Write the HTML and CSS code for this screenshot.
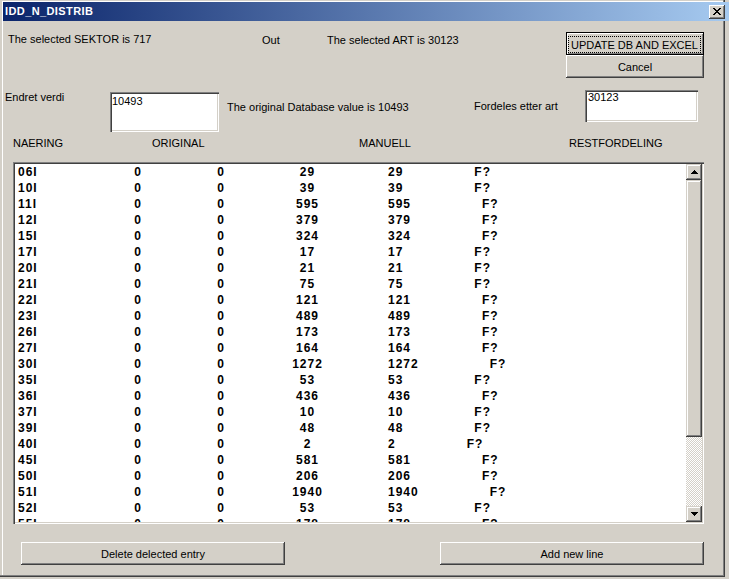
FILE: index.html
```html
<!DOCTYPE html>
<html>
<head>
<meta charset="utf-8">
<title>IDD_N_DISTRIB</title>
<link rel="stylesheet" href="styles.css">
</head>
<body>
<div class="window">
  <div class="titlebar">
    <span class="title">IDD_N_DISTRIB</span>
    <span class="close"><svg width="8" height="7" viewBox="0 0 8 7"><path d="M0 0h2v1h-2z M6 0h2v1h-2z M1 1h2v1h-2z M5 1h2v1h-2z M2 2h4v1h-4z M3 3h2v1h-2z M2 4h4v1h-4z M1 5h2v1h-2z M5 5h2v1h-2z M0 6h2v1h-2z M6 6h2v1h-2z" fill="#000"/></svg></span>
  </div>
  <div class="client">
    <div class="row1">
      <span class="lbl sektor">The selected SEKTOR is 717</span>
      <span class="lbl out">Out</span>
      <span class="lbl art">The selected ART is 30123</span>
      <div class="btncol">
        <button class="btn default"><span class="focus">UPDATE DB AND EXCEL</span></button>
        <button class="btn">Cancel</button>
      </div>
    </div>
    <div class="row2">
      <span class="lbl endret">Endret verdi</span>
      <div class="edit edit1">10493</div>
      <span class="lbl orig">The original Database value is 10493</span>
      <span class="lbl ford">Fordeles etter art</span>
      <div class="edit edit2">30123</div>
    </div>
    <div class="hdr">
      <span class="h1">NAERING</span>
      <span class="h2">ORIGINAL</span>
      <span class="h3">MANUELL</span>
      <span class="h4">RESTFORDELING</span>
    </div>
    <div class="listbox">
      <div class="rows">
        <div class="row"><span class="c1">06I</span><span class="c2">0</span><span class="c3">0</span><span class="c4">29</span><span class="c5">29<span class="fq">F?</span></span></div>
        <div class="row"><span class="c1">10I</span><span class="c2">0</span><span class="c3">0</span><span class="c4">39</span><span class="c5">39<span class="fq">F?</span></span></div>
        <div class="row"><span class="c1">11I</span><span class="c2">0</span><span class="c3">0</span><span class="c4">595</span><span class="c5">595<span class="fq">F?</span></span></div>
        <div class="row"><span class="c1">12I</span><span class="c2">0</span><span class="c3">0</span><span class="c4">379</span><span class="c5">379<span class="fq">F?</span></span></div>
        <div class="row"><span class="c1">15I</span><span class="c2">0</span><span class="c3">0</span><span class="c4">324</span><span class="c5">324<span class="fq">F?</span></span></div>
        <div class="row"><span class="c1">17I</span><span class="c2">0</span><span class="c3">0</span><span class="c4">17</span><span class="c5">17<span class="fq">F?</span></span></div>
        <div class="row"><span class="c1">20I</span><span class="c2">0</span><span class="c3">0</span><span class="c4">21</span><span class="c5">21<span class="fq">F?</span></span></div>
        <div class="row"><span class="c1">21I</span><span class="c2">0</span><span class="c3">0</span><span class="c4">75</span><span class="c5">75<span class="fq">F?</span></span></div>
        <div class="row"><span class="c1">22I</span><span class="c2">0</span><span class="c3">0</span><span class="c4">121</span><span class="c5">121<span class="fq">F?</span></span></div>
        <div class="row"><span class="c1">23I</span><span class="c2">0</span><span class="c3">0</span><span class="c4">489</span><span class="c5">489<span class="fq">F?</span></span></div>
        <div class="row"><span class="c1">26I</span><span class="c2">0</span><span class="c3">0</span><span class="c4">173</span><span class="c5">173<span class="fq">F?</span></span></div>
        <div class="row"><span class="c1">27I</span><span class="c2">0</span><span class="c3">0</span><span class="c4">164</span><span class="c5">164<span class="fq">F?</span></span></div>
        <div class="row"><span class="c1">30I</span><span class="c2">0</span><span class="c3">0</span><span class="c4">1272</span><span class="c5">1272<span class="fq">F?</span></span></div>
        <div class="row"><span class="c1">35I</span><span class="c2">0</span><span class="c3">0</span><span class="c4">53</span><span class="c5">53<span class="fq">F?</span></span></div>
        <div class="row"><span class="c1">36I</span><span class="c2">0</span><span class="c3">0</span><span class="c4">436</span><span class="c5">436<span class="fq">F?</span></span></div>
        <div class="row"><span class="c1">37I</span><span class="c2">0</span><span class="c3">0</span><span class="c4">10</span><span class="c5">10<span class="fq">F?</span></span></div>
        <div class="row"><span class="c1">39I</span><span class="c2">0</span><span class="c3">0</span><span class="c4">48</span><span class="c5">48<span class="fq">F?</span></span></div>
        <div class="row"><span class="c1">40I</span><span class="c2">0</span><span class="c3">0</span><span class="c4">2</span><span class="c5">2<span class="fq">F?</span></span></div>
        <div class="row"><span class="c1">45I</span><span class="c2">0</span><span class="c3">0</span><span class="c4">581</span><span class="c5">581<span class="fq">F?</span></span></div>
        <div class="row"><span class="c1">50I</span><span class="c2">0</span><span class="c3">0</span><span class="c4">206</span><span class="c5">206<span class="fq">F?</span></span></div>
        <div class="row"><span class="c1">51I</span><span class="c2">0</span><span class="c3">0</span><span class="c4">1940</span><span class="c5">1940<span class="fq">F?</span></span></div>
        <div class="row"><span class="c1">52I</span><span class="c2">0</span><span class="c3">0</span><span class="c4">53</span><span class="c5">53<span class="fq">F?</span></span></div>
        <div class="row"><span class="c1">55I</span><span class="c2">0</span><span class="c3">0</span><span class="c4">178</span><span class="c5">178<span class="fq">F?</span></span></div>
      </div>
      <div class="scrollbar">
        <div class="sbtn"><svg width="7" height="4" viewBox="0 0 7 4"><path d="M3 0h1v1h-1z M2 1h3v1h-3z M1 2h5v1h-5z M0 3h7v1h-7z" fill="#000"/></svg></div>
        <div class="thumb"></div>
        <div class="track"></div>
        <div class="sbtn"><svg width="7" height="4" viewBox="0 0 7 4"><path d="M0 0h7v1h-7z M1 1h5v1h-5z M2 2h3v1h-3z M3 3h1v1h-1z" fill="#000"/></svg></div>
      </div>
    </div>
    <div class="bottom">
      <button class="btn wide">Delete delected entry</button>
      <button class="btn wide add">Add new line</button>
    </div>
  </div>
</div>
</body>
</html>
```
FILE: styles.css
```css
* { box-sizing: border-box; }
html, body { margin: 0; padding: 0; }
body {
  background: #D4D0C8;
  width: 729px;
  height: 579px;
  overflow: hidden;
  font-family: "Liberation Sans", Arial, sans-serif;
  font-size: 11px;
  line-height: 13px;
  color: #000;
}
.window {
  width: 725px;
  height: 577px;
  padding: 2px 3px 0 3px;
  box-shadow: inset -1px -1px #404040, inset -2px -2px #808080, inset 2px 1px #D4D0C8, inset 3px 2px #FFFFFF;
}
.titlebar {
  height: 19px;
  margin-right: -7px;
  padding-left: 2px;
  display: flex;
  align-items: center;
  background: linear-gradient(to right, #0A246A, #A6CAF0);
}
.title {
  color: #fff;
  font-weight: bold;
  font-size: 11px;
  letter-spacing: 0.4px;
}
.close {
  margin-left: auto;
  margin-right: 4px;
  width: 16px;
  height: 14px;
  display: flex;
  align-items: center;
  justify-content: center;
  background: #D4D0C8;
  box-shadow: inset -1px -1px #404040, inset 1px 1px #FFFFFF, inset -2px -2px #808080;
}
.close svg { display: block; margin-left: 0; }

.lbl { white-space: nowrap; }

.row1 { display: flex; align-items: flex-start; margin-top: 11px; }
.sektor { margin-left: 5px; width: 254px; margin-top: 1px; }
.out { width: 65px; margin-top: 2px; }
.art { width: 239px; margin-top: 2px; }
.btncol { width: 138px; display: flex; flex-direction: column; }

.btn {
  font-family: inherit;
  font-size: 11px;
  color: #000;
  background: #D4D0C8;
  border: none;
  padding: 0;
  margin: 0;
  height: 23px;
  display: flex;
  align-items: center;
  justify-content: center;
  white-space: nowrap;
  box-shadow: inset -1px -1px #404040, inset 1px 1px #FFFFFF, inset -2px -2px #808080, inset 2px 2px #D4D0C8;
}
.btn.default {
  border: 1px solid #000;
  padding: 3px 2px 1px 1px;
  align-items: stretch;
  box-shadow: inset 1px 1px #FFFFFF, inset -1px -1px #808080;
}
.focus {
  flex: 1;
  border: 1px dotted #000;
  display: flex;
  align-items: center;
  justify-content: center;
}

.row2 { display: flex; align-items: flex-start; margin-top: 12px; }
.endret { margin-left: 2px; width: 105px; margin-top: 1px; }
.edit {
  background: #fff;
  box-shadow: inset 1px 1px #808080, inset 2px 2px #404040, inset -1px -1px #FFFFFF, inset -2px -2px #D4D0C8;
}
.edit1 { width: 109px; height: 40px; margin-top: 2px; padding: 3px 0 0 2px; }
.orig { margin-left: 8px; width: 247px; margin-top: 11px; }
.ford { width: 111px; margin-top: 10px; }
.edit2 { width: 113px; height: 32px; padding: 1px 0 0 3px; }

.hdr { display: flex; margin-top: 5px; margin-left: 10px; white-space: nowrap; }
.h1 { width: 139px; }
.h2 { width: 207px; }
.h3 { width: 210px; }

.listbox {
  margin-top: 12px;
  margin-left: 10px;
  width: 691px;
  height: 362px;
  padding: 2px;
  display: flex;
  background: #fff;
  box-shadow: inset 1px 1px #808080, inset 2px 2px #404040, inset -1px -1px #FFFFFF, inset -2px -2px #D4D0C8;
}
.rows {
  flex: 1;
  overflow: hidden;
  font-weight: bold;
  font-size: 12px;
  letter-spacing: 1px;
}
.row { display: flex; height: 16px; line-height: 16px; white-space: nowrap; }
.c1 { width: 85px; padding-left: 3px; }
.c2 { width: 76px; text-align: center; }
.c3 { width: 90px; text-align: center; }
.c4 { width: 83px; text-align: center; }
.c5 { padding-left: 39px; }
.fq { margin-left: 71px; }

.scrollbar { width: 16px; display: flex; flex-direction: column; }
.sbtn, .thumb {
  background: #D4D0C8;
  box-shadow: inset -1px -1px #404040, inset 1px 1px #D4D0C8, inset -2px -2px #808080, inset 2px 2px #FFFFFF;
}
.sbtn { height: 16px; display: flex; align-items: center; justify-content: center; }
.sbtn svg { display: block; }
.thumb { height: 257px; }
.track {
  flex: 1;
  background-image: conic-gradient(#FFFFFF 25%, #D4D0C8 0 50%, #FFFFFF 0 75%, #D4D0C8 0);
  background-size: 2px 2px;
}

.bottom { display: flex; margin-top: 18px; margin-left: 18px; }
.btn.wide { width: 264px; }
.btn.add { margin-left: 155px; }
```
